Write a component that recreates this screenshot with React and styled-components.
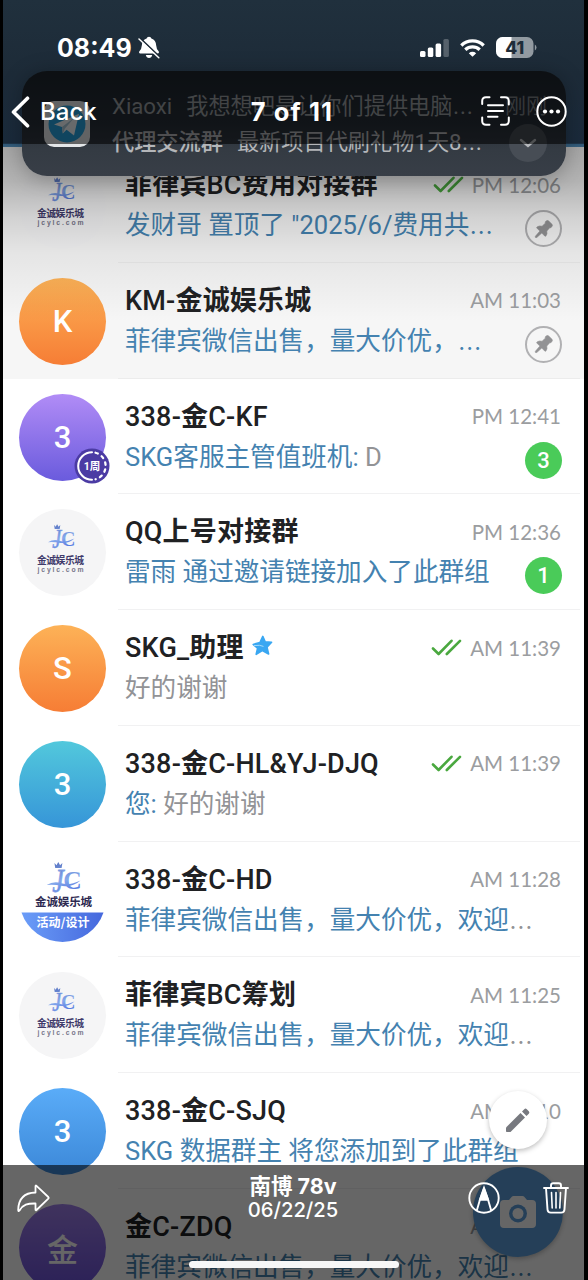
import React from 'react';
import styled, { createGlobalStyle, css } from 'styled-components';

const GlobalStyle = createGlobalStyle`
  * {
    box-sizing: border-box;
  }
  body {
    margin: 0;
    background: #000;
    overflow: hidden;
    font-family: Roboto, 'Noto Sans CJK SC', sans-serif;
  }
`;

const Viewer = styled.div`
  position: relative;
  width: 588px;
  height: 1280px;
  overflow: hidden;
  background: #000;
  padding: 0 4px 0 3px;
`;

// Chat list
const Photo = styled.div`
  height: 1280px;
  overflow: hidden;
  background: #fff;
`;

const Header = styled.div`
  height: 147px;
  background: linear-gradient(#20303d, #1d2b38 50%, #1a2a3b 97.5%, #305877 98%, #37607f);
`;

const Row = styled.div`
  display: flex;
  height: 115.75px;
  padding: 15px 0 0 16px;
  background: ${props => (props.$pinned ? '#f6f6f6' : '#fff')};
`;

const Avatar = styled.div`
  position: relative;
  flex: none;
  display: flex;
  align-items: center;
  justify-content: center;
  width: 87px;
  height: 87px;
  border-radius: 50%;
  background: ${props => props.$fill};
  color: #fff;
  font-size: 31px;
  font-weight: 500;
`;

const TimerBadge = styled.div`
  position: absolute;
  right: -4px;
  bottom: -3px;
  width: 36px;
  height: 36px;
`;

const Body = styled.div`
  flex: 1;
  min-width: 0;
  margin: -15px 4px 0 12px;
  padding: 16px 19px 0 7px;
  border-bottom: 1.5px solid ${props => (props.$pinned ? '#ececec' : '#f1f1f2')};
`;

const Line = styled.div`
  display: flex;
  align-items: center;
  justify-content: space-between;
  height: 39px;
  white-space: nowrap;
`;

const Name = styled.div`
  display: flex;
  align-items: center;
  gap: 8px;
  color: #202123;
  font-size: 27px;
  font-weight: 500;
  letter-spacing: 0.2px;
`;

const Han = styled.span`
  font-weight: 700;
`;

const Time = styled.div`
  display: flex;
  align-items: center;
  gap: 8px;
  padding-top: 4px;
  color: #9b9da0;
  font-family: Lato, 'Noto Sans', sans-serif;
  font-size: 20.5px;
`;

const Message = styled.div`
  color: #4482b0;
  font-size: 25.6px;
  padding-top: 2px;
`;

const Grey = styled.span`
  color: #929396;
`;

const Dots = styled.span`
  font-family: Inter, sans-serif;
  font-size: 1.1em;
  font-weight: 300;
  line-height: 0;
`;

const Unread = styled.div`
  display: flex;
  align-items: center;
  justify-content: center;
  width: 37px;
  height: 37px;
  margin: 14px -1px 0 0;
  border-radius: 50%;
  background: #4acb59;
  color: #fff;
  font-size: 22px;
  font-weight: 500;
`;

const PinRing = styled(Unread)`
  background: none;
  border: 2px solid #b1b1b3;
`;

// Floating buttons of the app below
const Fab = styled.div`
  position: absolute;
  display: flex;
  align-items: center;
  justify-content: center;
  border-radius: 50%;
  ${props =>
    props.$large
      ? css`
          left: 473px;
          top: 1167px;
          width: 90px;
          height: 90px;
          background: #5c9fdc;
        `
      : css`
          left: 489px;
          top: 1091px;
          width: 58px;
          height: 58px;
          background: #fff;
        `}
  box-shadow: 0 2px 5px rgba(0, 0, 0, 0.25);
`;

// Notification banner
const Shade = styled.div`
  position: absolute;
  left: 3px;
  right: 4px;
  top: 147px;
  height: 175px;
  background: linear-gradient(
    rgba(0, 0, 0, 0.33),
    rgba(0, 0, 0, 0.27) 20%,
    rgba(0, 0, 0, 0.15) 40%,
    rgba(0, 0, 0, 0.07) 60%,
    rgba(0, 0, 0, 0)
  );
`;

const Banner = styled.div`
  position: absolute;
  left: 22px;
  top: 71px;
  width: 544px;
  height: 105px;
  display: flex;
  padding: 17px 19px 0 22px;
  border-radius: 25px;
  background: linear-gradient(#1e262e, #272f38 50%, #343b43 75%, #383e47);
  box-shadow: 0 3px 22px rgba(0, 0, 0, 0.28);
`;

const BannerText = styled.div`
  flex: 1;
  padding-left: 22px;
  font-size: 22.2px;
  line-height: 36px;
  white-space: nowrap;
`;

const BannerLine = styled.div`
  display: flex;
  gap: 14px;
  color: ${props => (props.$strong ? '#b4b6b9' : '#999da1')};
`;

const Sender = styled.span`
  font-weight: 500;
`;

const BannerSide = styled.div`
  display: flex;
  flex-direction: column;
  align-items: flex-end;
  color: #7b8085;
  font-size: 21px;
  line-height: 36px;
`;

const Expand = styled.div`
  display: flex;
  align-items: center;
  justify-content: center;
  width: 38px;
  height: 38px;
  border-radius: 50%;
  background: #474d55;
`;

const AppIcon = styled.div`
  display: flex;
  align-items: center;
  justify-content: center;
  flex: none;
  width: 46px;
  height: 46px;
  margin-top: 13px;
  border-radius: 10px;
  background: #e3e6e8;
`;

// Viewer chrome
const TopBar = styled.div`
  position: absolute;
  left: 3px;
  right: 4px;
  top: 0;
  height: 144px;
  color: #fff;
  font-family: Inter, sans-serif;
`;

const BannerDim = styled.div`
  position: absolute;
  left: 22px;
  top: 71px;
  width: 544px;
  height: 73px;
  border-radius: 25px 25px 0 0;
  background: rgba(0, 0, 0, 0.57);
`;

const StatusRow = styled.div`
  display: flex;
  align-items: center;
  height: 79px;
  padding: 16px 47px 0 54px;
  font-size: 25px;
  font-weight: 700;
`;

const Bell = styled.svg`
  margin-left: 6px;
`;

const StatusIcons = styled.div`
  display: flex;
  align-items: center;
  gap: 11px;
  margin-left: auto;
`;

const NavRow = styled.div`
  display: grid;
  grid-template-columns: 1fr auto 1fr;
  align-items: center;
  height: 65px;
  padding: 0 17px 0 8px;
`;

const NavTitle = styled.div`
  padding-left: 6px;
  font-size: 25.5px;
  font-weight: 700;
  letter-spacing: 1.1px;
`;

const Back = styled.div`
  display: flex;
  align-items: center;
  gap: 10px;
  font-size: 24px;
  font-weight: 500;
`;

const NavActions = styled.div`
  display: flex;
  justify-content: flex-end;
  gap: ${props => props.$gap}px;
`;

const BottomBar = styled.div`
  position: absolute;
  left: 3px;
  right: 4px;
  bottom: 0;
  height: 115px;
  background: rgba(0, 0, 0, 0.6);
  color: #fff;
`;

const BottomRow = styled.div`
  display: grid;
  grid-template-columns: 1fr auto 1fr;
  height: 66px;
  align-items: center;
  padding: 0 15px 0 14px;
`;

const Caption = styled.div`
  font: 500 20.2px/24px Inter, 'Noto Sans CJK SC', sans-serif;
  text-align: center;
  margin-top: -1px;
`;

const CaptionName = styled.div`
  font-size: 21.5px;
  font-weight: 700;
`;

const HomeIndicator = styled.div`
  width: 210px;
  height: 7px;
  margin: 30px auto 0;
  border-radius: 4px;
  background: #f7f7f7;
`;

function Checks() {
  return (
    <svg width="31" height="17" viewBox="0 0 31 17" fill="none" stroke="#4aa83f" strokeWidth="2.6" strokeLinecap="round" strokeLinejoin="round">
      <path d="M2 9.5 7.6 15 20.5 1.8M15.8 15 29 1.8" />
    </svg>
  );
}

function Pin() {
  return (
    <svg width="20" height="20" viewBox="0 0 20 20" fill="#929294" stroke="#929294" strokeWidth="0.6">
      <path d="M11.6 2.4 13 1.6Q14 1.2 14.7 2L18 5.3Q18.8 6 18.2 7L17.4 8.2Q16.8 8.9 15.8 8.7L12.8 12Q13.6 15 11.9 17.1 11.3 17.6 10.7 17L7.8 14 3 18.3Q1.9 19 1.3 18.3 1 17.8 1.6 17L5.9 12.1 3 9.2Q2.3 8.6 3 8 5 6.4 8.1 7.2L11.3 4.2Q11 3.2 11.6 2.4Z" />
    </svg>
  );
}

function Star() {
  return (
    <svg width="21" height="21" viewBox="0 0 21 21" fill="#39a7f2" stroke="#39a7f2" strokeWidth="1.6" strokeLinejoin="round">
      <path d="M10.8 1.4 13.2 6.9 19.6 7.3 15 12.1 16.6 19 10.3 15.6 4.2 19.3 5.6 13.2 1.2 9.4 8 7.4Z" />
      <path d="M2 10.6Q8 9.6 11.5 11.4" stroke="#a4dbfa" strokeWidth="1" fill="none" />
    </svg>
  );
}

// The "JC" monogram with its crown and ribbon
function Monogram({ id, x, y, scale }) {
  return (
    <g transform={`translate(${x} ${y}) scale(${scale})`}>
      <defs>
        <linearGradient id={id} gradientUnits="userSpaceOnUse" x1="4" y1="2" x2="10" y2="28">
          <stop offset="0" stopColor="#5f7cc8" />
          <stop offset="0.5" stopColor="#86a9ec" />
          <stop offset="1" stopColor="#4267dc" />
        </linearGradient>
      </defs>
      <g fill={`url(#${id})`}>
        <text x="4.8" y="23" fontSize="27" fontFamily="'Liberation Serif', serif" fontStyle="italic" stroke="#7f9fe6" strokeWidth="0.6" textLength="9" lengthAdjust="spacingAndGlyphs">J</text>
        <text x="13.5" y="20.5" fontSize="20" fontFamily="'Liberation Serif', serif" fontWeight="700">C</text>
        <path d="M6.6 0 8.2 1.8 9.6-.8 11 1.8 12.8 0 12.2 4H7.2Z" />
        <path d="M.5 17.2Q6 13.8 12 15.8T27 13.6Q21 18.8 13 18 6 16.6.5 17.2Z" />
      </g>
    </g>
  );
}

function BrandLogo({ id }) {
  return (
    <svg width="87" height="87" viewBox="0 0 87 87">
      <Monogram id={id} x={28.5} y={16} scale={1} />
      <text x="41.5" y="54.8" textAnchor="middle" fontSize="9.8" fontWeight="700" fill="#3f3a6a" fontFamily="'Noto Sans CJK SC', sans-serif" textLength="47">金诚娱乐城</text>
      <text x="41.5" y="63" textAnchor="middle" fontSize="6.8" fontWeight="700" fill="#77768a" fontFamily="'Liberation Sans', sans-serif" textLength="46">jcylc.com</text>
    </svg>
  );
}

function EventLogo() {
  return (
    <svg width="87" height="87" viewBox="0 0 87 87">
      <defs>
        <linearGradient id="band" x1="0" x2="1">
          <stop offset="0" stopColor="#6b9df8" />
          <stop offset="1" stopColor="#4568dd" />
        </linearGradient>
      </defs>
      <Monogram id="event" x={27} y={6} scale={1.28} />
      <text x="44.5" y="49" textAnchor="middle" fontSize="11.5" fontWeight="700" fill="#2d2950" fontFamily="'Noto Sans CJK SC', sans-serif" textLength="57">金诚娱乐城</text>
      <path d="M2.5 55.5H84.5A43.3 43.3 0 0 1 2.5 55.5Z" fill="url(#band)" />
      <text x="44" y="70.3" textAnchor="middle" fontSize="12" fontWeight="700" fill="#fff" fontFamily="'Noto Sans CJK SC', sans-serif" textLength="53">活动/设计</text>
    </svg>
  );
}

function Timer() {
  return (
    <TimerBadge>
      <svg width="36" height="36" viewBox="0 0 36 36" fill="none">
        <circle cx="18" cy="18" r="17.5" fill="#4b3ba4" />
        <path d="M18 4.2A13.8 13.8 0 0 0 18 31.8" stroke="#fff" strokeWidth="2" strokeLinecap="round" />
        <path d="M21.5 4.7A13.8 13.8 0 0 1 21.5 31.3" stroke="#fff" strokeWidth="2.2" strokeDasharray="2.5 4.6" strokeLinecap="round" />
        <text x="18" y="21.8" textAnchor="middle" fontSize="10.5" fontWeight="700" fill="#fff" fontFamily="Roboto, 'Noto Sans CJK SC', sans-serif">1周</text>
      </svg>
    </TimerBadge>
  );
}

const ORANGE = 'linear-gradient(#fdb257, #f67d35)';
const PURPLE = 'linear-gradient(#b18cf6, #6a5bdd)';
const CYAN = 'linear-gradient(#52c8dc, #3695d8)';
const BLUE = 'linear-gradient(#5aacf8, #3c88d8)';
const PALE = '#f5f5f6';

const AD = '菲律宾微信出售，量大价优，';

const chats = [
  { logo: true, fill: PALE, name: '菲律宾BC费用对接群', text: '发财哥 置顶了 "2025/6/费用共…', time: 'PM 12:06', read: true, pinned: true },
  { letter: 'K', fill: ORANGE, name: 'KM-金诚娱乐城', text: `${AD}…`, time: 'AM 11:03', pinned: true },
  { letter: '3', fill: PURPLE, timer: true, name: '338-金C-KF', text: 'SKG客服主管值班机: ', tail: 'D', time: 'PM 12:41', unread: 3 },
  { logo: true, fill: PALE, name: 'QQ上号对接群', text: '雷雨 通过邀请链接加入了此群组', time: 'PM 12:36', unread: 1 },
  { letter: 'S', fill: ORANGE, name: 'SKG_助理', star: true, tail: '好的谢谢', time: 'AM 11:39', read: true },
  { letter: '3', fill: CYAN, name: '338-金C-HL&YJ-DJQ', text: '您: ', tail: '好的谢谢', time: 'AM 11:39', read: true },
  { event: true, fill: '#fff', name: '338-金C-HD', text: `${AD}欢迎`, tail: '…', time: 'AM 11:28' },
  { logo: true, fill: PALE, name: '菲律宾BC筹划', text: `${AD}欢迎`, tail: '…', time: 'AM 11:25' },
  { letter: '3', fill: BLUE, name: '338-金C-SJQ', text: 'SKG 数据群主 将您添加到了此群组', time: 'AM 11:10' },
  { letter: '金', fill: 'linear-gradient(#a080ea, #6a50d8)', name: '金C-ZDQ', text: `${AD}欢迎…`, time: 'AM 11:09' }
];

// Chinese characters are set one step bolder than the latin ones
function renderName(name) {
  return name
    .split(/([\u4e00-\u9fff]+)/)
    .map((part, i) => (i % 2 ? <Han key={i}>{part}</Han> : part));
}

function renderDots(text = '') {
  return text.split(/(…)/).map((part, i) => (i % 2 ? <Dots key={i}>{part}</Dots> : part));
}

function Chat({ chat, index }) {
  return (
    <Row $pinned={chat.pinned}>
      <Avatar $fill={chat.fill}>
        {chat.letter}
        {chat.logo && <BrandLogo id={`brand${index}`} />}
        {chat.event && <EventLogo />}
        {chat.timer && <Timer />}
      </Avatar>
      <Body $pinned={chat.pinned}>
        <Line>
          <Name>
            <span>{renderName(chat.name)}</span>
            {chat.star && <Star />}
          </Name>
          <Time>
            {chat.read && <Checks />}
            {chat.time}
          </Time>
        </Line>
        <Line>
          <Message>
            {renderDots(chat.text)}
            {chat.tail && <Grey>{renderDots(chat.tail)}</Grey>}
          </Message>
          {chat.unread && <Unread>{chat.unread}</Unread>}
          {chat.pinned && (
            <PinRing>
              <Pin />
            </PinRing>
          )}
        </Line>
      </Body>
    </Row>
  );
}

function Notification() {
  return (
    <Banner>
      <AppIcon>
        <svg width="38" height="38" viewBox="0 0 38 38">
          <circle cx="19" cy="19" r="18.5" fill="#25a0dc" />
          <path d="M6 19.5 31 8.8 26 30.5 18.6 24.8 14.8 28.4 14 22Z" fill="#f2f6f8" />
          <path d="M14 22 26.5 12.5 17 23.5 14.8 28.4Z" fill="#a9c8d8" />
        </svg>
      </AppIcon>
      <BannerText>
        <BannerLine>
          <span>Xiaoxi</span>
          <span>{renderDots('我想想吧是让你们提供电脑…')}</span>
        </BannerLine>
        <BannerLine $strong>
          <Sender>代理交流群</Sender>
          <span>{renderDots('最新项目代刷礼物1天8…')}</span>
        </BannerLine>
      </BannerText>
      <BannerSide>
        刚刚
        <Expand>
          <svg width="18" height="10" viewBox="0 0 18 10" fill="none" stroke="#b6b9bd" strokeWidth="2.4" strokeLinecap="round">
            <path d="m2 2 7 6 7-6" />
          </svg>
        </Expand>
      </BannerSide>
    </Banner>
  );
}

function StatusBar() {
  return (
    <StatusRow>
      08:49
      <Bell width="22" height="23" viewBox="0 0 22 23">
        <path d="M11 .8Q13 .8 13.4 2.4 18 4 18.2 9.5 18.3 13 20.8 15.5 21.5 17.6 19.8 17.6H2.2Q.5 17.6 1.2 15.5 3.7 13 3.8 9.5 4 4 8.6 2.4 9 .8 11 .8Z" fill="#fff" />
        <path d="M7.8 19H14.2Q13.5 22 11 22 8.5 22 7.8 19Z" fill="#fff" />
        <path d="M2 2.2 22 21.2" stroke="#1c2936" strokeWidth="1.8" />
        <path d="M1 3 20.8 21.8" stroke="#fff" strokeWidth="1.5" strokeLinecap="round" />
      </Bell>
      <StatusIcons>
        <svg width="29" height="18" viewBox="0 0 29 18" fill="#fff">
          <rect x="0" y="12" width="5.5" height="6" rx="1.5" />
          <rect x="7.8" y="8.5" width="5.5" height="9.5" rx="1.5" />
          <rect x="15.6" y="4.5" width="5.5" height="13.5" rx="1.5" />
          <rect x="23.4" y="0" width="5.5" height="18" rx="1.5" opacity="0.25" />
        </svg>
        <svg width="25" height="18" viewBox="0 0 25 18" fill="none" stroke="#fff" strokeWidth="3.3">
          <path d="M1.3 6.5A16 16 0 0 1 23.7 6.5" />
          <path d="M5.3 10.7A10.5 10.5 0 0 1 19.7 10.7" />
          <path d="M12.5 17.8 8.8 14.2Q12.5 11.3 16.2 14.2Z" fill="#fff" stroke="none" />
        </svg>
        <svg width="41" height="21" viewBox="0 0 41 21">
          <clipPath id="charge">
            <rect width="15.5" height="21" />
          </clipPath>
          <rect width="37.5" height="21" rx="6.5" fill="#929aa1" />
          <rect width="37.5" height="21" rx="6.5" fill="#fff" clipPath="url(#charge)" />
          <path d="M38.8 7.5Q40.5 8.5 40.5 10.5T38.8 13.5Z" fill="#929aa1" />
          <text x="18.8" y="16.7" textAnchor="middle" fontSize="17.5" fontWeight="800" fill="#1f2d39" fontFamily="Inter, sans-serif">41</text>
        </svg>
      </StatusIcons>
    </StatusRow>
  );
}

function NavBar() {
  return (
    <NavRow>
      <Back>
        <svg width="19" height="32" viewBox="0 0 19 32" fill="none" stroke="#fff" strokeWidth="3.6" strokeLinecap="round" strokeLinejoin="round">
          <path d="M16.5 2.2 2.5 16 16.5 29.8" />
        </svg>
        Back
      </Back>
      <NavTitle>7 of 11</NavTitle>
      <NavActions $gap={26}>
        <svg width="29" height="30" viewBox="0 0 29 30" fill="none" stroke="#fff" strokeWidth="2" strokeLinecap="round">
          <path d="M1.2 8V5Q1.2 1.2 5 1.2H8.5M20 1.2H24Q27.8 1.2 27.8 5V8.5M27.8 21.5V25Q27.8 28.8 24 28.8H20M8.5 28.8H5Q1.2 28.8 1.2 25V21.5" />
          <path d="M7 9.3H22M7 15H22M7 20.7H16.5" />
        </svg>
        <svg width="31" height="31" viewBox="0 0 31 31">
          <circle cx="15.5" cy="15.5" r="14.2" fill="none" stroke="#fff" strokeWidth="2" />
          <circle cx="9" cy="15.5" r="2.1" fill="#fff" />
          <circle cx="15.5" cy="15.5" r="2.1" fill="#fff" />
          <circle cx="22" cy="15.5" r="2.1" fill="#fff" />
        </svg>
      </NavActions>
    </NavRow>
  );
}

function Toolbar() {
  return (
    <BottomBar>
      <BottomRow>
        <svg width="33" height="29" viewBox="0 0 33 29" fill="none" stroke="#fff" strokeWidth="1.8" strokeLinejoin="round">
          <path d="M18.5 2.2Q18.5 1 19.5 1.9L31.3 13Q32 13.8 31.3 14.6L19.5 26Q18.5 26.8 18.5 25.5V19.5C10.5 19.3 6 20.5 2.5 26.5Q1.2 28 1.2 26 1.5 9 18.5 8.5Z" />
        </svg>
        <Caption>
          <CaptionName>南博 78v</CaptionName>
          06/22/25
        </Caption>
        <NavActions $gap={43}>
          <svg width="32" height="32" viewBox="0 0 32 32" fill="none" stroke="#fff" strokeWidth="1.9">
            <circle cx="16" cy="16" r="14.7" />
            <path d="M8.8 28.5 12 17.5 16 6.5 20 17.5 23.2 28.5M12 17.5H20" strokeLinejoin="round" />
            <path d="M12 17.5 16 6 20 17.5Z" fill="#fff" />
          </svg>
          <svg width="26" height="32" viewBox="0 0 26 32" fill="none" stroke="#fff" strokeWidth="1.9" strokeLinecap="round" strokeLinejoin="round">
            <path d="M1 6H25M8 6V3.5Q8 1.2 10.2 1.2H15.8Q18 1.2 18 3.5V6M3 6 4.5 27.5Q4.7 30.6 7.8 30.6H18.2Q21.3 30.6 21.5 27.5L23 6" />
            <path d="M8.5 10.5 9.2 26M13 10.5V26M17.5 10.5 16.8 26" strokeWidth="1.6" />
          </svg>
        </NavActions>
      </BottomRow>
      <HomeIndicator />
    </BottomBar>
  );
}

export default function App() {
  return (
    <Viewer>
      <GlobalStyle />
      <Photo>
        <Header />
        {chats.map((chat, index) => (
          <Chat key={chat.name} chat={chat} index={index} />
        ))}
      </Photo>
      <Shade />
      <Fab>
        <svg width="26" height="26" viewBox="0 0 26 26" fill="#77797f">
          <path d="M1 20.5 15.5 6 20 10.5 5.5 25H1.8Q1 25 1 24.2Z" />
          <path d="M17 4.5 19.3 2.2Q20.5 1 21.8 2.2L23.8 4.2Q25 5.5 23.8 6.7L21.5 9Z" />
        </svg>
      </Fab>
      <Fab $large>
        <svg width="36" height="34" viewBox="0 0 36 34">
          <path d="M4 5H9L12 1.5Q12.5 1 13.5 1H22.5Q23.5 1 24 1.5L27 5H32Q36 5 36 9V29Q36 33 32 33H4Q0 33 0 29V9Q0 5 4 5Z" fill="#fff" />
          <circle cx="18" cy="18.5" r="9" fill="#5c9fdc" />
          <circle cx="18" cy="18.5" r="5.5" fill="#fff" />
        </svg>
      </Fab>
      <Notification />
      <BannerDim />
      <TopBar>
        <StatusBar />
        <NavBar />
      </TopBar>
      <Toolbar />
    </Viewer>
  );
}
